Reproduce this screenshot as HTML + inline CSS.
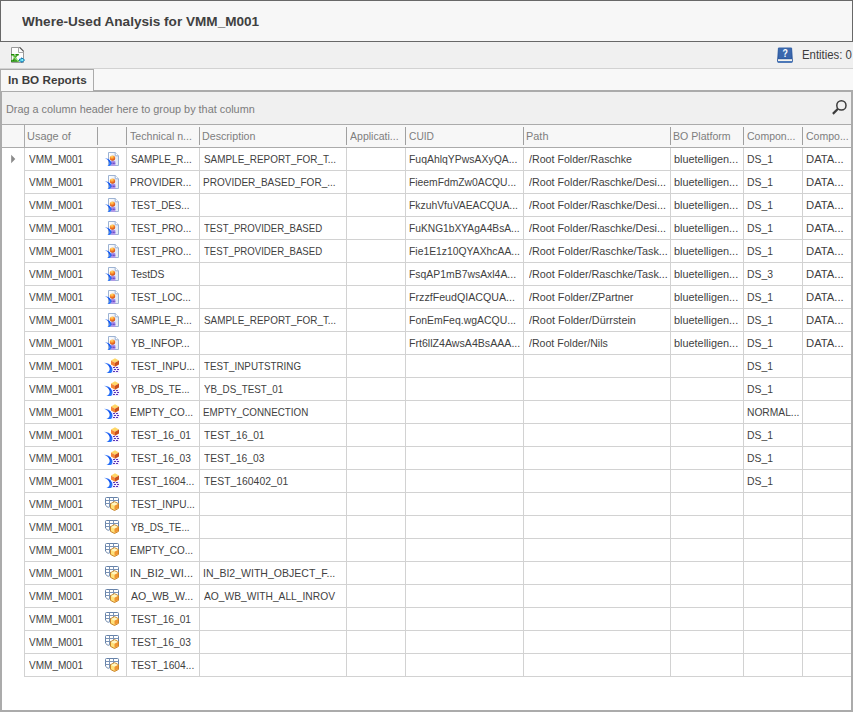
<!DOCTYPE html><html lang="en"><head><meta charset="utf-8"><title>Where-Used Analysis for VMM_M001</title><style>
html,body{margin:0;padding:0}
body{width:853px;height:712px;position:relative;overflow:hidden;background:#f0f0f0;font-family:"Liberation Sans", sans-serif;font-size:11px;color:#333}
div,span,svg{position:absolute;box-sizing:border-box}
.t{white-space:pre;line-height:14px;height:14px;transform-origin:0 0}
.ttl{color:#404040;font-weight:700}
.tab{color:#3c3c3c;font-weight:700}
.ent{color:#3c3c3c}
.grp{color:#7c7c7c}
.hd{color:#7e7e7e}
.c{color:#3f3f3f}
.v{width:1px;background:#d2d2d2}
.h{height:1px;background:#d2d2d2}
.hv{width:1px;background:#a0a0a0}
</style></head><body>
<div style="left:0;top:0;width:853px;height:42px;background:#f7f7f7;border:1px solid #686868"></div>
<div style="left:0;top:42px;width:853px;height:26px;background:#f0f0f0"></div>
<div style="left:0;top:68px;width:853px;height:1px;background:#d2d2d2"></div>
<div style="left:0;top:69px;width:853px;height:21px;background:#f8f8f8"></div>
<div style="left:0;top:90px;width:853px;height:622px;background:#fff;border:2px solid #ababab"></div>
<div style="left:0;top:69px;width:94px;height:22px;background:#f7f7f7;border:1px solid #ababab;border-bottom:none"></div>
<div style="left:1px;top:90px;width:92px;height:1px;background:#f7f7f7"></div>
<div style="left:2px;top:92px;width:849px;height:32px;background:#f0f0f0"></div>
<div style="left:2px;top:124px;width:849px;height:1px;background:#ababab"></div>
<div style="left:2px;top:125px;width:849px;height:22px;background:#f7f7f7"></div>
<div style="left:2px;top:147px;width:849px;height:1px;background:#ababab"></div>
<div class="hv" style="left:24px;top:125px;height:22px;background:#ababab"></div>
<div class="hv" style="left:97px;top:127px;height:18px"></div>
<div class="hv" style="left:126px;top:127px;height:18px"></div>
<div class="hv" style="left:199px;top:127px;height:18px"></div>
<div class="hv" style="left:346px;top:127px;height:18px"></div>
<div class="hv" style="left:405px;top:127px;height:18px"></div>
<div class="hv" style="left:523px;top:127px;height:18px"></div>
<div class="hv" style="left:670px;top:127px;height:18px"></div>
<div class="hv" style="left:743px;top:127px;height:18px"></div>
<div class="hv" style="left:802px;top:127px;height:18px"></div>
<div class="v" style="left:24px;top:148px;height:529px"></div>
<div class="v" style="left:97px;top:148px;height:529px"></div>
<div class="v" style="left:126px;top:148px;height:529px"></div>
<div class="v" style="left:199px;top:148px;height:529px"></div>
<div class="v" style="left:346px;top:148px;height:529px"></div>
<div class="v" style="left:405px;top:148px;height:529px"></div>
<div class="v" style="left:523px;top:148px;height:529px"></div>
<div class="v" style="left:670px;top:148px;height:529px"></div>
<div class="v" style="left:743px;top:148px;height:529px"></div>
<div class="v" style="left:802px;top:148px;height:529px"></div>
<div class="h" style="left:25px;top:170px;width:826px"></div>
<div class="h" style="left:25px;top:193px;width:826px"></div>
<div class="h" style="left:25px;top:216px;width:826px"></div>
<div class="h" style="left:25px;top:239px;width:826px"></div>
<div class="h" style="left:25px;top:262px;width:826px"></div>
<div class="h" style="left:25px;top:285px;width:826px"></div>
<div class="h" style="left:25px;top:308px;width:826px"></div>
<div class="h" style="left:25px;top:331px;width:826px"></div>
<div class="h" style="left:25px;top:354px;width:826px"></div>
<div class="h" style="left:25px;top:377px;width:826px"></div>
<div class="h" style="left:25px;top:400px;width:826px"></div>
<div class="h" style="left:25px;top:423px;width:826px"></div>
<div class="h" style="left:25px;top:446px;width:826px"></div>
<div class="h" style="left:25px;top:469px;width:826px"></div>
<div class="h" style="left:25px;top:492px;width:826px"></div>
<div class="h" style="left:25px;top:515px;width:826px"></div>
<div class="h" style="left:25px;top:538px;width:826px"></div>
<div class="h" style="left:25px;top:561px;width:826px"></div>
<div class="h" style="left:25px;top:584px;width:826px"></div>
<div class="h" style="left:25px;top:607px;width:826px"></div>
<div class="h" style="left:25px;top:630px;width:826px"></div>
<div class="h" style="left:25px;top:653px;width:826px"></div>
<div class="h" style="left:25px;top:676px;width:826px"></div>
<svg style="left:10px;top:154px" width="8" height="10" viewBox="0 0 8 10"><path d="M1.2 0.8 L5.3 5 L1.2 9.2 Z" fill="#8a8a8a"/></svg>
<span class="t ttl" style="left:22.00px;top:15px;font-size:13px;transform:scaleX(1.0444)">Where-Used Analysis for VMM_M001</span>
<span class="t tab" style="left:8.00px;top:73px;font-size:11px;transform:scaleX(1.0633)">In BO Reports</span>
<span class="t ent" style="left:802.00px;top:48px;font-size:12.3px;transform:scaleX(0.9229)">Entities: 0</span>
<span class="t grp" style="left:6.00px;top:102px;font-size:11px;transform:scaleX(0.9873)">Drag a column header here to group by that column</span>
<span class="t hd" style="left:27.00px;top:129px;font-size:11px;transform:scaleX(0.9973)">Usage of</span>
<span class="t hd" style="left:130.00px;top:129px;font-size:11px;transform:scaleX(0.9649)">Technical n...</span>
<span class="t hd" style="left:202.00px;top:129px;font-size:11px;transform:scaleX(0.9699)">Description</span>
<span class="t hd" style="left:350.00px;top:129px;font-size:11px;transform:scaleX(0.9571)">Applicati...</span>
<span class="t hd" style="left:409.00px;top:129px;font-size:11px;transform:scaleX(0.9290)">CUID</span>
<span class="t hd" style="left:526.00px;top:129px;font-size:11px;transform:scaleX(0.9929)">Path</span>
<span class="t hd" style="left:673.00px;top:129px;font-size:11px;transform:scaleX(0.9628)">BO Platform</span>
<span class="t hd" style="left:747.00px;top:129px;font-size:11px;transform:scaleX(0.9540)">Compon...</span>
<span class="t hd" style="left:806.00px;top:129px;font-size:11px;transform:scaleX(0.9573)">Compo...</span>
<span class="t c" style="left:29.00px;top:152px;font-size:11px;transform:scaleX(0.9128)">VMM_M001</span>
<span class="t c" style="left:131.00px;top:152px;font-size:11px;transform:scaleX(0.8940)">SAMPLE_R...</span>
<span class="t c" style="left:204.00px;top:152px;font-size:11px;transform:scaleX(0.9018)">SAMPLE_REPORT_FOR_T...</span>
<span class="t c" style="left:409.00px;top:152px;font-size:11px;transform:scaleX(0.9483)">FuqAhlqYPwsAXyQA...</span>
<span class="t c" style="left:529.00px;top:152px;font-size:11px;transform:scaleX(0.9678)">/Root Folder/Raschke</span>
<span class="t c" style="left:674.00px;top:152px;font-size:11px;transform:scaleX(0.9897)">bluetelligen...</span>
<span class="t c" style="left:806.00px;top:152px;font-size:11px;transform:scaleX(1.0238)">DATA...</span>
<span class="t c" style="left:747.00px;top:152px;font-size:11px;transform:scaleX(0.9476)">DS_1</span>
<span class="t c" style="left:29.00px;top:175px;font-size:11px;transform:scaleX(0.9128)">VMM_M001</span>
<span class="t c" style="left:130.00px;top:175px;font-size:11px;transform:scaleX(0.9197)">PROVIDER...</span>
<span class="t c" style="left:203.00px;top:175px;font-size:11px;transform:scaleX(0.9111)">PROVIDER_BASED_FOR_...</span>
<span class="t c" style="left:409.00px;top:175px;font-size:11px;transform:scaleX(0.9376)">FieemFdmZw0ACQU...</span>
<span class="t c" style="left:529.00px;top:175px;font-size:11px;transform:scaleX(0.9735)">/Root Folder/Raschke/Desi...</span>
<span class="t c" style="left:674.00px;top:175px;font-size:11px;transform:scaleX(0.9897)">bluetelligen...</span>
<span class="t c" style="left:806.00px;top:175px;font-size:11px;transform:scaleX(1.0238)">DATA...</span>
<span class="t c" style="left:747.00px;top:175px;font-size:11px;transform:scaleX(0.9476)">DS_1</span>
<span class="t c" style="left:29.00px;top:198px;font-size:11px;transform:scaleX(0.9128)">VMM_M001</span>
<span class="t c" style="left:131.00px;top:198px;font-size:11px;transform:scaleX(0.8851)">TEST_DES...</span>
<span class="t c" style="left:409.00px;top:198px;font-size:11px;transform:scaleX(0.9400)">FkzuhVfuVAEACQUA...</span>
<span class="t c" style="left:529.00px;top:198px;font-size:11px;transform:scaleX(0.9735)">/Root Folder/Raschke/Desi...</span>
<span class="t c" style="left:674.00px;top:198px;font-size:11px;transform:scaleX(0.9897)">bluetelligen...</span>
<span class="t c" style="left:806.00px;top:198px;font-size:11px;transform:scaleX(1.0238)">DATA...</span>
<span class="t c" style="left:747.00px;top:198px;font-size:11px;transform:scaleX(0.9476)">DS_1</span>
<span class="t c" style="left:29.00px;top:221px;font-size:11px;transform:scaleX(0.9128)">VMM_M001</span>
<span class="t c" style="left:131.00px;top:221px;font-size:11px;transform:scaleX(0.8961)">TEST_PRO...</span>
<span class="t c" style="left:204.00px;top:221px;font-size:11px;transform:scaleX(0.8741)">TEST_PROVIDER_BASED</span>
<span class="t c" style="left:409.00px;top:221px;font-size:11px;transform:scaleX(0.9294)">FuKNG1bXYAgA4BsA...</span>
<span class="t c" style="left:529.00px;top:221px;font-size:11px;transform:scaleX(0.9735)">/Root Folder/Raschke/Desi...</span>
<span class="t c" style="left:674.00px;top:221px;font-size:11px;transform:scaleX(0.9897)">bluetelligen...</span>
<span class="t c" style="left:806.00px;top:221px;font-size:11px;transform:scaleX(1.0238)">DATA...</span>
<span class="t c" style="left:747.00px;top:221px;font-size:11px;transform:scaleX(0.9476)">DS_1</span>
<span class="t c" style="left:29.00px;top:244px;font-size:11px;transform:scaleX(0.9128)">VMM_M001</span>
<span class="t c" style="left:131.00px;top:244px;font-size:11px;transform:scaleX(0.8961)">TEST_PRO...</span>
<span class="t c" style="left:204.00px;top:244px;font-size:11px;transform:scaleX(0.8741)">TEST_PROVIDER_BASED</span>
<span class="t c" style="left:409.00px;top:244px;font-size:11px;transform:scaleX(0.9420)">Fie1E1z10QYAXhcAA...</span>
<span class="t c" style="left:529.00px;top:244px;font-size:11px;transform:scaleX(0.9833)">/Root Folder/Raschke/Task...</span>
<span class="t c" style="left:674.00px;top:244px;font-size:11px;transform:scaleX(0.9897)">bluetelligen...</span>
<span class="t c" style="left:806.00px;top:244px;font-size:11px;transform:scaleX(1.0238)">DATA...</span>
<span class="t c" style="left:747.00px;top:244px;font-size:11px;transform:scaleX(0.9476)">DS_1</span>
<span class="t c" style="left:29.00px;top:267px;font-size:11px;transform:scaleX(0.9128)">VMM_M001</span>
<span class="t c" style="left:131.00px;top:267px;font-size:11px;transform:scaleX(0.9447)">TestDS</span>
<span class="t c" style="left:409.00px;top:267px;font-size:11px;transform:scaleX(0.9464)">FsqAP1mB7wsAxl4A...</span>
<span class="t c" style="left:529.00px;top:267px;font-size:11px;transform:scaleX(0.9833)">/Root Folder/Raschke/Task...</span>
<span class="t c" style="left:674.00px;top:267px;font-size:11px;transform:scaleX(0.9897)">bluetelligen...</span>
<span class="t c" style="left:806.00px;top:267px;font-size:11px;transform:scaleX(1.0238)">DATA...</span>
<span class="t c" style="left:747.00px;top:267px;font-size:11px;transform:scaleX(0.9420)">DS_3</span>
<span class="t c" style="left:29.00px;top:290px;font-size:11px;transform:scaleX(0.9128)">VMM_M001</span>
<span class="t c" style="left:131.00px;top:290px;font-size:11px;transform:scaleX(0.9050)">TEST_LOC...</span>
<span class="t c" style="left:409.00px;top:290px;font-size:11px;transform:scaleX(0.9685)">FrzzfFeudQIACQUA...</span>
<span class="t c" style="left:529.00px;top:290px;font-size:11px;transform:scaleX(0.9812)">/Root Folder/ZPartner</span>
<span class="t c" style="left:674.00px;top:290px;font-size:11px;transform:scaleX(0.9897)">bluetelligen...</span>
<span class="t c" style="left:806.00px;top:290px;font-size:11px;transform:scaleX(1.0238)">DATA...</span>
<span class="t c" style="left:747.00px;top:290px;font-size:11px;transform:scaleX(0.9476)">DS_1</span>
<span class="t c" style="left:29.00px;top:313px;font-size:11px;transform:scaleX(0.9128)">VMM_M001</span>
<span class="t c" style="left:131.00px;top:313px;font-size:11px;transform:scaleX(0.8940)">SAMPLE_R...</span>
<span class="t c" style="left:204.00px;top:313px;font-size:11px;transform:scaleX(0.9018)">SAMPLE_REPORT_FOR_T...</span>
<span class="t c" style="left:409.00px;top:313px;font-size:11px;transform:scaleX(0.9514)">FonEmFeq.wgACQU...</span>
<span class="t c" style="left:529.00px;top:313px;font-size:11px;transform:scaleX(0.9877)">/Root Folder/Dürrstein</span>
<span class="t c" style="left:674.00px;top:313px;font-size:11px;transform:scaleX(0.9897)">bluetelligen...</span>
<span class="t c" style="left:806.00px;top:313px;font-size:11px;transform:scaleX(1.0238)">DATA...</span>
<span class="t c" style="left:747.00px;top:313px;font-size:11px;transform:scaleX(0.9476)">DS_1</span>
<span class="t c" style="left:29.00px;top:336px;font-size:11px;transform:scaleX(0.9128)">VMM_M001</span>
<span class="t c" style="left:131.00px;top:336px;font-size:11px;transform:scaleX(0.9447)">YB_INFOP...</span>
<span class="t c" style="left:409.00px;top:336px;font-size:11px;transform:scaleX(0.9646)">Frt6llZ4AwsA4BsAAA...</span>
<span class="t c" style="left:529.00px;top:336px;font-size:11px;transform:scaleX(0.9621)">/Root Folder/Nils</span>
<span class="t c" style="left:674.00px;top:336px;font-size:11px;transform:scaleX(0.9897)">bluetelligen...</span>
<span class="t c" style="left:806.00px;top:336px;font-size:11px;transform:scaleX(1.0238)">DATA...</span>
<span class="t c" style="left:747.00px;top:336px;font-size:11px;transform:scaleX(0.9476)">DS_1</span>
<span class="t c" style="left:29.00px;top:359px;font-size:11px;transform:scaleX(0.9128)">VMM_M001</span>
<span class="t c" style="left:131.00px;top:359px;font-size:11px;transform:scaleX(0.9161)">TEST_INPU...</span>
<span class="t c" style="left:204.00px;top:359px;font-size:11px;transform:scaleX(0.8918)">TEST_INPUTSTRING</span>
<span class="t c" style="left:747.00px;top:359px;font-size:11px;transform:scaleX(0.9476)">DS_1</span>
<span class="t c" style="left:29.00px;top:382px;font-size:11px;transform:scaleX(0.9128)">VMM_M001</span>
<span class="t c" style="left:131.00px;top:382px;font-size:11px;transform:scaleX(0.8959)">YB_DS_TE...</span>
<span class="t c" style="left:204.00px;top:382px;font-size:11px;transform:scaleX(0.8922)">YB_DS_TEST_01</span>
<span class="t c" style="left:747.00px;top:382px;font-size:11px;transform:scaleX(0.9476)">DS_1</span>
<span class="t c" style="left:29.00px;top:405px;font-size:11px;transform:scaleX(0.9128)">VMM_M001</span>
<span class="t c" style="left:130.00px;top:405px;font-size:11px;transform:scaleX(0.9057)">EMPTY_CO...</span>
<span class="t c" style="left:203.00px;top:405px;font-size:11px;transform:scaleX(0.8921)">EMPTY_CONNECTION</span>
<span class="t c" style="left:747.00px;top:405px;font-size:11px;transform:scaleX(0.9314)">NORMAL...</span>
<span class="t c" style="left:29.00px;top:428px;font-size:11px;transform:scaleX(0.9128)">VMM_M001</span>
<span class="t c" style="left:131.00px;top:428px;font-size:11px;transform:scaleX(0.9260)">TEST_16_01</span>
<span class="t c" style="left:204.00px;top:428px;font-size:11px;transform:scaleX(0.9346)">TEST_16_01</span>
<span class="t c" style="left:747.00px;top:428px;font-size:11px;transform:scaleX(0.9476)">DS_1</span>
<span class="t c" style="left:29.00px;top:451px;font-size:11px;transform:scaleX(0.9128)">VMM_M001</span>
<span class="t c" style="left:131.00px;top:451px;font-size:11px;transform:scaleX(0.9235)">TEST_16_03</span>
<span class="t c" style="left:204.00px;top:451px;font-size:11px;transform:scaleX(0.9313)">TEST_16_03</span>
<span class="t c" style="left:747.00px;top:451px;font-size:11px;transform:scaleX(0.9476)">DS_1</span>
<span class="t c" style="left:29.00px;top:474px;font-size:11px;transform:scaleX(0.9128)">VMM_M001</span>
<span class="t c" style="left:131.00px;top:474px;font-size:11px;transform:scaleX(0.9330)">TEST_1604...</span>
<span class="t c" style="left:204.00px;top:474px;font-size:11px;transform:scaleX(0.9435)">TEST_160402_01</span>
<span class="t c" style="left:747.00px;top:474px;font-size:11px;transform:scaleX(0.9476)">DS_1</span>
<span class="t c" style="left:29.00px;top:497px;font-size:11px;transform:scaleX(0.9128)">VMM_M001</span>
<span class="t c" style="left:131.00px;top:497px;font-size:11px;transform:scaleX(0.9161)">TEST_INPU...</span>
<span class="t c" style="left:29.00px;top:520px;font-size:11px;transform:scaleX(0.9128)">VMM_M001</span>
<span class="t c" style="left:131.00px;top:520px;font-size:11px;transform:scaleX(0.8959)">YB_DS_TE...</span>
<span class="t c" style="left:29.00px;top:543px;font-size:11px;transform:scaleX(0.9128)">VMM_M001</span>
<span class="t c" style="left:130.00px;top:543px;font-size:11px;transform:scaleX(0.9057)">EMPTY_CO...</span>
<span class="t c" style="left:29.00px;top:566px;font-size:11px;transform:scaleX(0.9128)">VMM_M001</span>
<span class="t c" style="left:130.00px;top:566px;font-size:11px;transform:scaleX(1.0116)">IN_BI2_WI...</span>
<span class="t c" style="left:203.00px;top:566px;font-size:11px;transform:scaleX(0.9573)">IN_BI2_WITH_OBJECT_F...</span>
<span class="t c" style="left:29.00px;top:589px;font-size:11px;transform:scaleX(0.9128)">VMM_M001</span>
<span class="t c" style="left:131.00px;top:589px;font-size:11px;transform:scaleX(0.9602)">AO_WB_W...</span>
<span class="t c" style="left:204.00px;top:589px;font-size:11px;transform:scaleX(0.9316)">AO_WB_WITH_ALL_INROV</span>
<span class="t c" style="left:29.00px;top:612px;font-size:11px;transform:scaleX(0.9128)">VMM_M001</span>
<span class="t c" style="left:131.00px;top:612px;font-size:11px;transform:scaleX(0.9260)">TEST_16_01</span>
<span class="t c" style="left:29.00px;top:635px;font-size:11px;transform:scaleX(0.9128)">VMM_M001</span>
<span class="t c" style="left:131.00px;top:635px;font-size:11px;transform:scaleX(0.9235)">TEST_16_03</span>
<span class="t c" style="left:29.00px;top:658px;font-size:11px;transform:scaleX(0.9128)">VMM_M001</span>
<span class="t c" style="left:131.00px;top:658px;font-size:11px;transform:scaleX(0.9330)">TEST_1604...</span>
<svg width="0" height="0" style="left:0;top:0"><defs>
<radialGradient id="gball" cx="0.4" cy="0.22" r="0.9"><stop offset="0" stop-color="#ffe46e"/><stop offset="0.3" stop-color="#ffa63c"/><stop offset="0.62" stop-color="#ea6a20"/><stop offset="1" stop-color="#a82c06"/></radialGradient>
<linearGradient id="gsw" x1="0" y1="0" x2="1" y2="1"><stop offset="0" stop-color="#6aa0ff"/><stop offset="0.5" stop-color="#0a50f0"/><stop offset="1" stop-color="#3c8cff"/></linearGradient>
<linearGradient id="gdoc" x1="0" y1="0" x2="1" y2="0"><stop offset="0" stop-color="#ffffff"/><stop offset="1" stop-color="#dfe8f6"/></linearGradient>
<linearGradient id="gbook" x1="0" y1="0" x2="0" y2="1"><stop offset="0" stop-color="#3a67aa"/><stop offset="1" stop-color="#2a559c"/></linearGradient>
</defs></svg>
<svg style="left:104px;top:151px" width="16" height="16" viewBox="0 0 16 16"><path d="M4.5 1.5 H11.2 L14.5 4.8 V14.5 H4.5 Z" fill="url(#gdoc)" stroke="#9db3d3" stroke-width="1"/>
 <path d="M11.2 1.5 V4.8 H14.5" fill="#fff" stroke="#9db3d3" stroke-width="1"/>
 <rect x="7" y="9.8" width="4.3" height="4.9" fill="#a990e8"/>
 <rect x="7.2" y="11.7" width="1.1" height="1.1" fill="#5a38c0"/><rect x="8.8" y="11.7" width="1.1" height="1.1" fill="#5a38c0"/><rect x="10.3" y="11.7" width="1" height="1.1" fill="#5a38c0"/><rect x="7" y="13.6" width="4.3" height="1.1" fill="#b49cec"/>
 <circle cx="8.5" cy="7.1" r="2.7" fill="url(#gball)"/>
 <path d="M0.8 6.9 C3.5 7.1 6.6 8.6 7.4 11.4 C7.8 12.8 7.2 14.2 5.4 14.9 L3.2 14.9 C5 14.2 5.6 13 5.2 11.4 C4.8 9.6 3.2 8.1 0.8 6.9 Z" fill="url(#gsw)"/></svg>
<svg style="left:104px;top:174px" width="16" height="16" viewBox="0 0 16 16"><path d="M4.5 1.5 H11.2 L14.5 4.8 V14.5 H4.5 Z" fill="url(#gdoc)" stroke="#9db3d3" stroke-width="1"/>
 <path d="M11.2 1.5 V4.8 H14.5" fill="#fff" stroke="#9db3d3" stroke-width="1"/>
 <rect x="7" y="9.8" width="4.3" height="4.9" fill="#a990e8"/>
 <rect x="7.2" y="11.7" width="1.1" height="1.1" fill="#5a38c0"/><rect x="8.8" y="11.7" width="1.1" height="1.1" fill="#5a38c0"/><rect x="10.3" y="11.7" width="1" height="1.1" fill="#5a38c0"/><rect x="7" y="13.6" width="4.3" height="1.1" fill="#b49cec"/>
 <circle cx="8.5" cy="7.1" r="2.7" fill="url(#gball)"/>
 <path d="M0.8 6.9 C3.5 7.1 6.6 8.6 7.4 11.4 C7.8 12.8 7.2 14.2 5.4 14.9 L3.2 14.9 C5 14.2 5.6 13 5.2 11.4 C4.8 9.6 3.2 8.1 0.8 6.9 Z" fill="url(#gsw)"/></svg>
<svg style="left:104px;top:197px" width="16" height="16" viewBox="0 0 16 16"><path d="M4.5 1.5 H11.2 L14.5 4.8 V14.5 H4.5 Z" fill="url(#gdoc)" stroke="#9db3d3" stroke-width="1"/>
 <path d="M11.2 1.5 V4.8 H14.5" fill="#fff" stroke="#9db3d3" stroke-width="1"/>
 <rect x="7" y="9.8" width="4.3" height="4.9" fill="#a990e8"/>
 <rect x="7.2" y="11.7" width="1.1" height="1.1" fill="#5a38c0"/><rect x="8.8" y="11.7" width="1.1" height="1.1" fill="#5a38c0"/><rect x="10.3" y="11.7" width="1" height="1.1" fill="#5a38c0"/><rect x="7" y="13.6" width="4.3" height="1.1" fill="#b49cec"/>
 <circle cx="8.5" cy="7.1" r="2.7" fill="url(#gball)"/>
 <path d="M0.8 6.9 C3.5 7.1 6.6 8.6 7.4 11.4 C7.8 12.8 7.2 14.2 5.4 14.9 L3.2 14.9 C5 14.2 5.6 13 5.2 11.4 C4.8 9.6 3.2 8.1 0.8 6.9 Z" fill="url(#gsw)"/></svg>
<svg style="left:104px;top:220px" width="16" height="16" viewBox="0 0 16 16"><path d="M4.5 1.5 H11.2 L14.5 4.8 V14.5 H4.5 Z" fill="url(#gdoc)" stroke="#9db3d3" stroke-width="1"/>
 <path d="M11.2 1.5 V4.8 H14.5" fill="#fff" stroke="#9db3d3" stroke-width="1"/>
 <rect x="7" y="9.8" width="4.3" height="4.9" fill="#a990e8"/>
 <rect x="7.2" y="11.7" width="1.1" height="1.1" fill="#5a38c0"/><rect x="8.8" y="11.7" width="1.1" height="1.1" fill="#5a38c0"/><rect x="10.3" y="11.7" width="1" height="1.1" fill="#5a38c0"/><rect x="7" y="13.6" width="4.3" height="1.1" fill="#b49cec"/>
 <circle cx="8.5" cy="7.1" r="2.7" fill="url(#gball)"/>
 <path d="M0.8 6.9 C3.5 7.1 6.6 8.6 7.4 11.4 C7.8 12.8 7.2 14.2 5.4 14.9 L3.2 14.9 C5 14.2 5.6 13 5.2 11.4 C4.8 9.6 3.2 8.1 0.8 6.9 Z" fill="url(#gsw)"/></svg>
<svg style="left:104px;top:243px" width="16" height="16" viewBox="0 0 16 16"><path d="M4.5 1.5 H11.2 L14.5 4.8 V14.5 H4.5 Z" fill="url(#gdoc)" stroke="#9db3d3" stroke-width="1"/>
 <path d="M11.2 1.5 V4.8 H14.5" fill="#fff" stroke="#9db3d3" stroke-width="1"/>
 <rect x="7" y="9.8" width="4.3" height="4.9" fill="#a990e8"/>
 <rect x="7.2" y="11.7" width="1.1" height="1.1" fill="#5a38c0"/><rect x="8.8" y="11.7" width="1.1" height="1.1" fill="#5a38c0"/><rect x="10.3" y="11.7" width="1" height="1.1" fill="#5a38c0"/><rect x="7" y="13.6" width="4.3" height="1.1" fill="#b49cec"/>
 <circle cx="8.5" cy="7.1" r="2.7" fill="url(#gball)"/>
 <path d="M0.8 6.9 C3.5 7.1 6.6 8.6 7.4 11.4 C7.8 12.8 7.2 14.2 5.4 14.9 L3.2 14.9 C5 14.2 5.6 13 5.2 11.4 C4.8 9.6 3.2 8.1 0.8 6.9 Z" fill="url(#gsw)"/></svg>
<svg style="left:104px;top:266px" width="16" height="16" viewBox="0 0 16 16"><path d="M4.5 1.5 H11.2 L14.5 4.8 V14.5 H4.5 Z" fill="url(#gdoc)" stroke="#9db3d3" stroke-width="1"/>
 <path d="M11.2 1.5 V4.8 H14.5" fill="#fff" stroke="#9db3d3" stroke-width="1"/>
 <rect x="7" y="9.8" width="4.3" height="4.9" fill="#a990e8"/>
 <rect x="7.2" y="11.7" width="1.1" height="1.1" fill="#5a38c0"/><rect x="8.8" y="11.7" width="1.1" height="1.1" fill="#5a38c0"/><rect x="10.3" y="11.7" width="1" height="1.1" fill="#5a38c0"/><rect x="7" y="13.6" width="4.3" height="1.1" fill="#b49cec"/>
 <circle cx="8.5" cy="7.1" r="2.7" fill="url(#gball)"/>
 <path d="M0.8 6.9 C3.5 7.1 6.6 8.6 7.4 11.4 C7.8 12.8 7.2 14.2 5.4 14.9 L3.2 14.9 C5 14.2 5.6 13 5.2 11.4 C4.8 9.6 3.2 8.1 0.8 6.9 Z" fill="url(#gsw)"/></svg>
<svg style="left:104px;top:289px" width="16" height="16" viewBox="0 0 16 16"><path d="M4.5 1.5 H11.2 L14.5 4.8 V14.5 H4.5 Z" fill="url(#gdoc)" stroke="#9db3d3" stroke-width="1"/>
 <path d="M11.2 1.5 V4.8 H14.5" fill="#fff" stroke="#9db3d3" stroke-width="1"/>
 <rect x="7" y="9.8" width="4.3" height="4.9" fill="#a990e8"/>
 <rect x="7.2" y="11.7" width="1.1" height="1.1" fill="#5a38c0"/><rect x="8.8" y="11.7" width="1.1" height="1.1" fill="#5a38c0"/><rect x="10.3" y="11.7" width="1" height="1.1" fill="#5a38c0"/><rect x="7" y="13.6" width="4.3" height="1.1" fill="#b49cec"/>
 <circle cx="8.5" cy="7.1" r="2.7" fill="url(#gball)"/>
 <path d="M0.8 6.9 C3.5 7.1 6.6 8.6 7.4 11.4 C7.8 12.8 7.2 14.2 5.4 14.9 L3.2 14.9 C5 14.2 5.6 13 5.2 11.4 C4.8 9.6 3.2 8.1 0.8 6.9 Z" fill="url(#gsw)"/></svg>
<svg style="left:104px;top:312px" width="16" height="16" viewBox="0 0 16 16"><path d="M4.5 1.5 H11.2 L14.5 4.8 V14.5 H4.5 Z" fill="url(#gdoc)" stroke="#9db3d3" stroke-width="1"/>
 <path d="M11.2 1.5 V4.8 H14.5" fill="#fff" stroke="#9db3d3" stroke-width="1"/>
 <rect x="7" y="9.8" width="4.3" height="4.9" fill="#a990e8"/>
 <rect x="7.2" y="11.7" width="1.1" height="1.1" fill="#5a38c0"/><rect x="8.8" y="11.7" width="1.1" height="1.1" fill="#5a38c0"/><rect x="10.3" y="11.7" width="1" height="1.1" fill="#5a38c0"/><rect x="7" y="13.6" width="4.3" height="1.1" fill="#b49cec"/>
 <circle cx="8.5" cy="7.1" r="2.7" fill="url(#gball)"/>
 <path d="M0.8 6.9 C3.5 7.1 6.6 8.6 7.4 11.4 C7.8 12.8 7.2 14.2 5.4 14.9 L3.2 14.9 C5 14.2 5.6 13 5.2 11.4 C4.8 9.6 3.2 8.1 0.8 6.9 Z" fill="url(#gsw)"/></svg>
<svg style="left:104px;top:335px" width="16" height="16" viewBox="0 0 16 16"><path d="M4.5 1.5 H11.2 L14.5 4.8 V14.5 H4.5 Z" fill="url(#gdoc)" stroke="#9db3d3" stroke-width="1"/>
 <path d="M11.2 1.5 V4.8 H14.5" fill="#fff" stroke="#9db3d3" stroke-width="1"/>
 <rect x="7" y="9.8" width="4.3" height="4.9" fill="#a990e8"/>
 <rect x="7.2" y="11.7" width="1.1" height="1.1" fill="#5a38c0"/><rect x="8.8" y="11.7" width="1.1" height="1.1" fill="#5a38c0"/><rect x="10.3" y="11.7" width="1" height="1.1" fill="#5a38c0"/><rect x="7" y="13.6" width="4.3" height="1.1" fill="#b49cec"/>
 <circle cx="8.5" cy="7.1" r="2.7" fill="url(#gball)"/>
 <path d="M0.8 6.9 C3.5 7.1 6.6 8.6 7.4 11.4 C7.8 12.8 7.2 14.2 5.4 14.9 L3.2 14.9 C5 14.2 5.6 13 5.2 11.4 C4.8 9.6 3.2 8.1 0.8 6.9 Z" fill="url(#gsw)"/></svg>
<svg style="left:104px;top:358px" width="16" height="16" viewBox="0 0 16 16"><rect x="8" y="8.4" width="7.4" height="6.4" fill="#f1ebff"/>
 <g fill="#5a36b8"><rect x="9" y="9" width="2" height="1"/><rect x="12" y="9" width="2" height="1"/><rect x="10" y="11" width="2" height="1"/><rect x="13" y="11" width="2" height="1"/><rect x="9" y="13" width="2" height="1"/><rect x="12" y="13" width="2" height="1"/></g>
 <path d="M11 0.2 L15 2.4 L11 4.8 L7 2.4 Z" fill="#ffd766"/>
 <path d="M7 2.4 L11 4.8 V8.8 L7 6.6 Z" fill="#f58636"/>
 <path d="M15 2.4 L11 4.8 V8.8 L15 6.6 Z" fill="#c8501e"/>
 <path d="M0 4.8 C3 4.8 6.6 6.2 8 9.4 C8.8 11.4 8.6 13.4 7.2 15 L2.4 15 C4.8 14 6 12.4 5.6 10 C5.2 7.8 3 6 0 4.8 Z" fill="url(#gsw)"/></svg>
<svg style="left:104px;top:381px" width="16" height="16" viewBox="0 0 16 16"><rect x="8" y="8.4" width="7.4" height="6.4" fill="#f1ebff"/>
 <g fill="#5a36b8"><rect x="9" y="9" width="2" height="1"/><rect x="12" y="9" width="2" height="1"/><rect x="10" y="11" width="2" height="1"/><rect x="13" y="11" width="2" height="1"/><rect x="9" y="13" width="2" height="1"/><rect x="12" y="13" width="2" height="1"/></g>
 <path d="M11 0.2 L15 2.4 L11 4.8 L7 2.4 Z" fill="#ffd766"/>
 <path d="M7 2.4 L11 4.8 V8.8 L7 6.6 Z" fill="#f58636"/>
 <path d="M15 2.4 L11 4.8 V8.8 L15 6.6 Z" fill="#c8501e"/>
 <path d="M0 4.8 C3 4.8 6.6 6.2 8 9.4 C8.8 11.4 8.6 13.4 7.2 15 L2.4 15 C4.8 14 6 12.4 5.6 10 C5.2 7.8 3 6 0 4.8 Z" fill="url(#gsw)"/></svg>
<svg style="left:104px;top:404px" width="16" height="16" viewBox="0 0 16 16"><rect x="8" y="8.4" width="7.4" height="6.4" fill="#f1ebff"/>
 <g fill="#5a36b8"><rect x="9" y="9" width="2" height="1"/><rect x="12" y="9" width="2" height="1"/><rect x="10" y="11" width="2" height="1"/><rect x="13" y="11" width="2" height="1"/><rect x="9" y="13" width="2" height="1"/><rect x="12" y="13" width="2" height="1"/></g>
 <path d="M11 0.2 L15 2.4 L11 4.8 L7 2.4 Z" fill="#ffd766"/>
 <path d="M7 2.4 L11 4.8 V8.8 L7 6.6 Z" fill="#f58636"/>
 <path d="M15 2.4 L11 4.8 V8.8 L15 6.6 Z" fill="#c8501e"/>
 <path d="M0 4.8 C3 4.8 6.6 6.2 8 9.4 C8.8 11.4 8.6 13.4 7.2 15 L2.4 15 C4.8 14 6 12.4 5.6 10 C5.2 7.8 3 6 0 4.8 Z" fill="url(#gsw)"/></svg>
<svg style="left:104px;top:427px" width="16" height="16" viewBox="0 0 16 16"><rect x="8" y="8.4" width="7.4" height="6.4" fill="#f1ebff"/>
 <g fill="#5a36b8"><rect x="9" y="9" width="2" height="1"/><rect x="12" y="9" width="2" height="1"/><rect x="10" y="11" width="2" height="1"/><rect x="13" y="11" width="2" height="1"/><rect x="9" y="13" width="2" height="1"/><rect x="12" y="13" width="2" height="1"/></g>
 <path d="M11 0.2 L15 2.4 L11 4.8 L7 2.4 Z" fill="#ffd766"/>
 <path d="M7 2.4 L11 4.8 V8.8 L7 6.6 Z" fill="#f58636"/>
 <path d="M15 2.4 L11 4.8 V8.8 L15 6.6 Z" fill="#c8501e"/>
 <path d="M0 4.8 C3 4.8 6.6 6.2 8 9.4 C8.8 11.4 8.6 13.4 7.2 15 L2.4 15 C4.8 14 6 12.4 5.6 10 C5.2 7.8 3 6 0 4.8 Z" fill="url(#gsw)"/></svg>
<svg style="left:104px;top:450px" width="16" height="16" viewBox="0 0 16 16"><rect x="8" y="8.4" width="7.4" height="6.4" fill="#f1ebff"/>
 <g fill="#5a36b8"><rect x="9" y="9" width="2" height="1"/><rect x="12" y="9" width="2" height="1"/><rect x="10" y="11" width="2" height="1"/><rect x="13" y="11" width="2" height="1"/><rect x="9" y="13" width="2" height="1"/><rect x="12" y="13" width="2" height="1"/></g>
 <path d="M11 0.2 L15 2.4 L11 4.8 L7 2.4 Z" fill="#ffd766"/>
 <path d="M7 2.4 L11 4.8 V8.8 L7 6.6 Z" fill="#f58636"/>
 <path d="M15 2.4 L11 4.8 V8.8 L15 6.6 Z" fill="#c8501e"/>
 <path d="M0 4.8 C3 4.8 6.6 6.2 8 9.4 C8.8 11.4 8.6 13.4 7.2 15 L2.4 15 C4.8 14 6 12.4 5.6 10 C5.2 7.8 3 6 0 4.8 Z" fill="url(#gsw)"/></svg>
<svg style="left:104px;top:473px" width="16" height="16" viewBox="0 0 16 16"><rect x="8" y="8.4" width="7.4" height="6.4" fill="#f1ebff"/>
 <g fill="#5a36b8"><rect x="9" y="9" width="2" height="1"/><rect x="12" y="9" width="2" height="1"/><rect x="10" y="11" width="2" height="1"/><rect x="13" y="11" width="2" height="1"/><rect x="9" y="13" width="2" height="1"/><rect x="12" y="13" width="2" height="1"/></g>
 <path d="M11 0.2 L15 2.4 L11 4.8 L7 2.4 Z" fill="#ffd766"/>
 <path d="M7 2.4 L11 4.8 V8.8 L7 6.6 Z" fill="#f58636"/>
 <path d="M15 2.4 L11 4.8 V8.8 L15 6.6 Z" fill="#c8501e"/>
 <path d="M0 4.8 C3 4.8 6.6 6.2 8 9.4 C8.8 11.4 8.6 13.4 7.2 15 L2.4 15 C4.8 14 6 12.4 5.6 10 C5.2 7.8 3 6 0 4.8 Z" fill="url(#gsw)"/></svg>
<svg style="left:104px;top:496px" width="16" height="16" viewBox="0 0 16 16"><path d="M2.5 1.5 H13.5 Q14.5 1.5 14.5 2.5 V9 H6 V10.5 Q4.5 11.8 3.2 10.8 L1.5 9.2 V2.5 Q1.5 1.5 2.5 1.5 Z" fill="#fff" stroke="#6682a8" stroke-width="1"/>
 <path d="M1.5 4.5 H14.5 M1.5 7.5 H14.5 M5.5 1.5 V10.5 M9.5 1.5 V8" stroke="#7a93b6" stroke-width="1" fill="none"/>
 <path d="M10.5 5.7 L14.5 7.7 V12.4 L10.5 14.5 L6.5 12.4 V7.7 Z" fill="#ffe27a" stroke="#c9842a" stroke-width="1" stroke-linejoin="round"/>
 <path d="M10.5 6.3 L14 7.9 L10.5 9.8 L7 7.9 Z" fill="#fff6c4"/>
 <path d="M10.5 9.8 L14 7.9 V12.1 L10.5 14 Z" fill="#f09432"/></svg>
<svg style="left:104px;top:519px" width="16" height="16" viewBox="0 0 16 16"><path d="M2.5 1.5 H13.5 Q14.5 1.5 14.5 2.5 V9 H6 V10.5 Q4.5 11.8 3.2 10.8 L1.5 9.2 V2.5 Q1.5 1.5 2.5 1.5 Z" fill="#fff" stroke="#6682a8" stroke-width="1"/>
 <path d="M1.5 4.5 H14.5 M1.5 7.5 H14.5 M5.5 1.5 V10.5 M9.5 1.5 V8" stroke="#7a93b6" stroke-width="1" fill="none"/>
 <path d="M10.5 5.7 L14.5 7.7 V12.4 L10.5 14.5 L6.5 12.4 V7.7 Z" fill="#ffe27a" stroke="#c9842a" stroke-width="1" stroke-linejoin="round"/>
 <path d="M10.5 6.3 L14 7.9 L10.5 9.8 L7 7.9 Z" fill="#fff6c4"/>
 <path d="M10.5 9.8 L14 7.9 V12.1 L10.5 14 Z" fill="#f09432"/></svg>
<svg style="left:104px;top:542px" width="16" height="16" viewBox="0 0 16 16"><path d="M2.5 1.5 H13.5 Q14.5 1.5 14.5 2.5 V9 H6 V10.5 Q4.5 11.8 3.2 10.8 L1.5 9.2 V2.5 Q1.5 1.5 2.5 1.5 Z" fill="#fff" stroke="#6682a8" stroke-width="1"/>
 <path d="M1.5 4.5 H14.5 M1.5 7.5 H14.5 M5.5 1.5 V10.5 M9.5 1.5 V8" stroke="#7a93b6" stroke-width="1" fill="none"/>
 <path d="M10.5 5.7 L14.5 7.7 V12.4 L10.5 14.5 L6.5 12.4 V7.7 Z" fill="#ffe27a" stroke="#c9842a" stroke-width="1" stroke-linejoin="round"/>
 <path d="M10.5 6.3 L14 7.9 L10.5 9.8 L7 7.9 Z" fill="#fff6c4"/>
 <path d="M10.5 9.8 L14 7.9 V12.1 L10.5 14 Z" fill="#f09432"/></svg>
<svg style="left:104px;top:565px" width="16" height="16" viewBox="0 0 16 16"><path d="M2.5 1.5 H13.5 Q14.5 1.5 14.5 2.5 V9 H6 V10.5 Q4.5 11.8 3.2 10.8 L1.5 9.2 V2.5 Q1.5 1.5 2.5 1.5 Z" fill="#fff" stroke="#6682a8" stroke-width="1"/>
 <path d="M1.5 4.5 H14.5 M1.5 7.5 H14.5 M5.5 1.5 V10.5 M9.5 1.5 V8" stroke="#7a93b6" stroke-width="1" fill="none"/>
 <path d="M10.5 5.7 L14.5 7.7 V12.4 L10.5 14.5 L6.5 12.4 V7.7 Z" fill="#ffe27a" stroke="#c9842a" stroke-width="1" stroke-linejoin="round"/>
 <path d="M10.5 6.3 L14 7.9 L10.5 9.8 L7 7.9 Z" fill="#fff6c4"/>
 <path d="M10.5 9.8 L14 7.9 V12.1 L10.5 14 Z" fill="#f09432"/></svg>
<svg style="left:104px;top:588px" width="16" height="16" viewBox="0 0 16 16"><path d="M2.5 1.5 H13.5 Q14.5 1.5 14.5 2.5 V9 H6 V10.5 Q4.5 11.8 3.2 10.8 L1.5 9.2 V2.5 Q1.5 1.5 2.5 1.5 Z" fill="#fff" stroke="#6682a8" stroke-width="1"/>
 <path d="M1.5 4.5 H14.5 M1.5 7.5 H14.5 M5.5 1.5 V10.5 M9.5 1.5 V8" stroke="#7a93b6" stroke-width="1" fill="none"/>
 <path d="M10.5 5.7 L14.5 7.7 V12.4 L10.5 14.5 L6.5 12.4 V7.7 Z" fill="#ffe27a" stroke="#c9842a" stroke-width="1" stroke-linejoin="round"/>
 <path d="M10.5 6.3 L14 7.9 L10.5 9.8 L7 7.9 Z" fill="#fff6c4"/>
 <path d="M10.5 9.8 L14 7.9 V12.1 L10.5 14 Z" fill="#f09432"/></svg>
<svg style="left:104px;top:611px" width="16" height="16" viewBox="0 0 16 16"><path d="M2.5 1.5 H13.5 Q14.5 1.5 14.5 2.5 V9 H6 V10.5 Q4.5 11.8 3.2 10.8 L1.5 9.2 V2.5 Q1.5 1.5 2.5 1.5 Z" fill="#fff" stroke="#6682a8" stroke-width="1"/>
 <path d="M1.5 4.5 H14.5 M1.5 7.5 H14.5 M5.5 1.5 V10.5 M9.5 1.5 V8" stroke="#7a93b6" stroke-width="1" fill="none"/>
 <path d="M10.5 5.7 L14.5 7.7 V12.4 L10.5 14.5 L6.5 12.4 V7.7 Z" fill="#ffe27a" stroke="#c9842a" stroke-width="1" stroke-linejoin="round"/>
 <path d="M10.5 6.3 L14 7.9 L10.5 9.8 L7 7.9 Z" fill="#fff6c4"/>
 <path d="M10.5 9.8 L14 7.9 V12.1 L10.5 14 Z" fill="#f09432"/></svg>
<svg style="left:104px;top:634px" width="16" height="16" viewBox="0 0 16 16"><path d="M2.5 1.5 H13.5 Q14.5 1.5 14.5 2.5 V9 H6 V10.5 Q4.5 11.8 3.2 10.8 L1.5 9.2 V2.5 Q1.5 1.5 2.5 1.5 Z" fill="#fff" stroke="#6682a8" stroke-width="1"/>
 <path d="M1.5 4.5 H14.5 M1.5 7.5 H14.5 M5.5 1.5 V10.5 M9.5 1.5 V8" stroke="#7a93b6" stroke-width="1" fill="none"/>
 <path d="M10.5 5.7 L14.5 7.7 V12.4 L10.5 14.5 L6.5 12.4 V7.7 Z" fill="#ffe27a" stroke="#c9842a" stroke-width="1" stroke-linejoin="round"/>
 <path d="M10.5 6.3 L14 7.9 L10.5 9.8 L7 7.9 Z" fill="#fff6c4"/>
 <path d="M10.5 9.8 L14 7.9 V12.1 L10.5 14 Z" fill="#f09432"/></svg>
<svg style="left:104px;top:657px" width="16" height="16" viewBox="0 0 16 16"><path d="M2.5 1.5 H13.5 Q14.5 1.5 14.5 2.5 V9 H6 V10.5 Q4.5 11.8 3.2 10.8 L1.5 9.2 V2.5 Q1.5 1.5 2.5 1.5 Z" fill="#fff" stroke="#6682a8" stroke-width="1"/>
 <path d="M1.5 4.5 H14.5 M1.5 7.5 H14.5 M5.5 1.5 V10.5 M9.5 1.5 V8" stroke="#7a93b6" stroke-width="1" fill="none"/>
 <path d="M10.5 5.7 L14.5 7.7 V12.4 L10.5 14.5 L6.5 12.4 V7.7 Z" fill="#ffe27a" stroke="#c9842a" stroke-width="1" stroke-linejoin="round"/>
 <path d="M10.5 6.3 L14 7.9 L10.5 9.8 L7 7.9 Z" fill="#fff6c4"/>
 <path d="M10.5 9.8 L14 7.9 V12.1 L10.5 14 Z" fill="#f09432"/></svg>
<svg style="left:10px;top:47px" width="16" height="16" viewBox="0 0 16 16">
<path d="M1.5 0.5 H9.8 L13.5 4.2 V15.5 H1.5 Z" fill="#fdfdfd" stroke="#9a9a9a" stroke-width="1"/>
<path d="M8.5 0.5 V5.5 H13.5" fill="none" stroke="#a8a8a8" stroke-width="1"/>
<path d="M9.6 0.4 L13.6 4.4" stroke="#5a5a5a" stroke-width="1.2" fill="none"/>
<rect x="1" y="13.2" width="8" height="1.6" fill="#1f8a06"/>
<path d="M2 7.8 H4 L8.2 14 H6.2 Z" fill="#2a9a0c"/>
<path d="M8 7.8 H6.2 L2 14 H3.8 Z" fill="#1f8a06"/>
<rect x="1" y="7" width="3.4" height="1.4" fill="#1f8a06"/><rect x="5.4" y="7" width="3.4" height="1.4" fill="#1f8a06"/>
<path d="M2.6 8.4 L8.6 14.6" stroke="#9be37a" stroke-width="1.1" fill="none"/>
<path d="M7 8.6 L2.4 13" stroke="#7fd35e" stroke-width="0.9" fill="none"/>
<path d="M9.6 12 H11.6 V10.8 L14.6 13.1 L11.6 15.4 V14.2 H9.6 Z" fill="#7ff4fb" stroke="#127ab8" stroke-width="1" stroke-linejoin="round"/>
</svg>
<svg style="left:777px;top:47px" width="16" height="16" viewBox="0 0 16 16">
<path d="M2 0.6 H14 Q15 0.6 15.1 1.6 L15.9 14 Q15.9 15.8 14.4 15.8 H1.6 Q0.1 15.8 0.1 14 L0.9 1.6 Q1 0.6 2 0.6 Z" fill="url(#gbook)"/>
<rect x="2" y="1.8" width="12" height="9.4" fill="#3f6bb0" opacity="0.7"/>
<rect x="1" y="12.2" width="14" height="1.8" fill="#f4f3ee"/>
<rect x="0.8" y="14" width="14.4" height="1.6" fill="#4a78ba"/>
<text transform="translate(8.2 10.1) scale(0.88 1)" x="0" y="0" text-anchor="middle" font-family="Liberation Sans, sans-serif" font-weight="700" font-size="10" fill="#fff">?</text>
</svg>
<svg style="left:830px;top:98px" width="20" height="20" viewBox="0 0 20 20">
<circle cx="11.4" cy="7.4" r="4.6" fill="none" stroke="#3c3c3c" stroke-width="1.5"/>
<path d="M8 10.8 L2.9 15.9" stroke="#3c3c3c" stroke-width="2.2" fill="none"/>
</svg>
</body></html>
